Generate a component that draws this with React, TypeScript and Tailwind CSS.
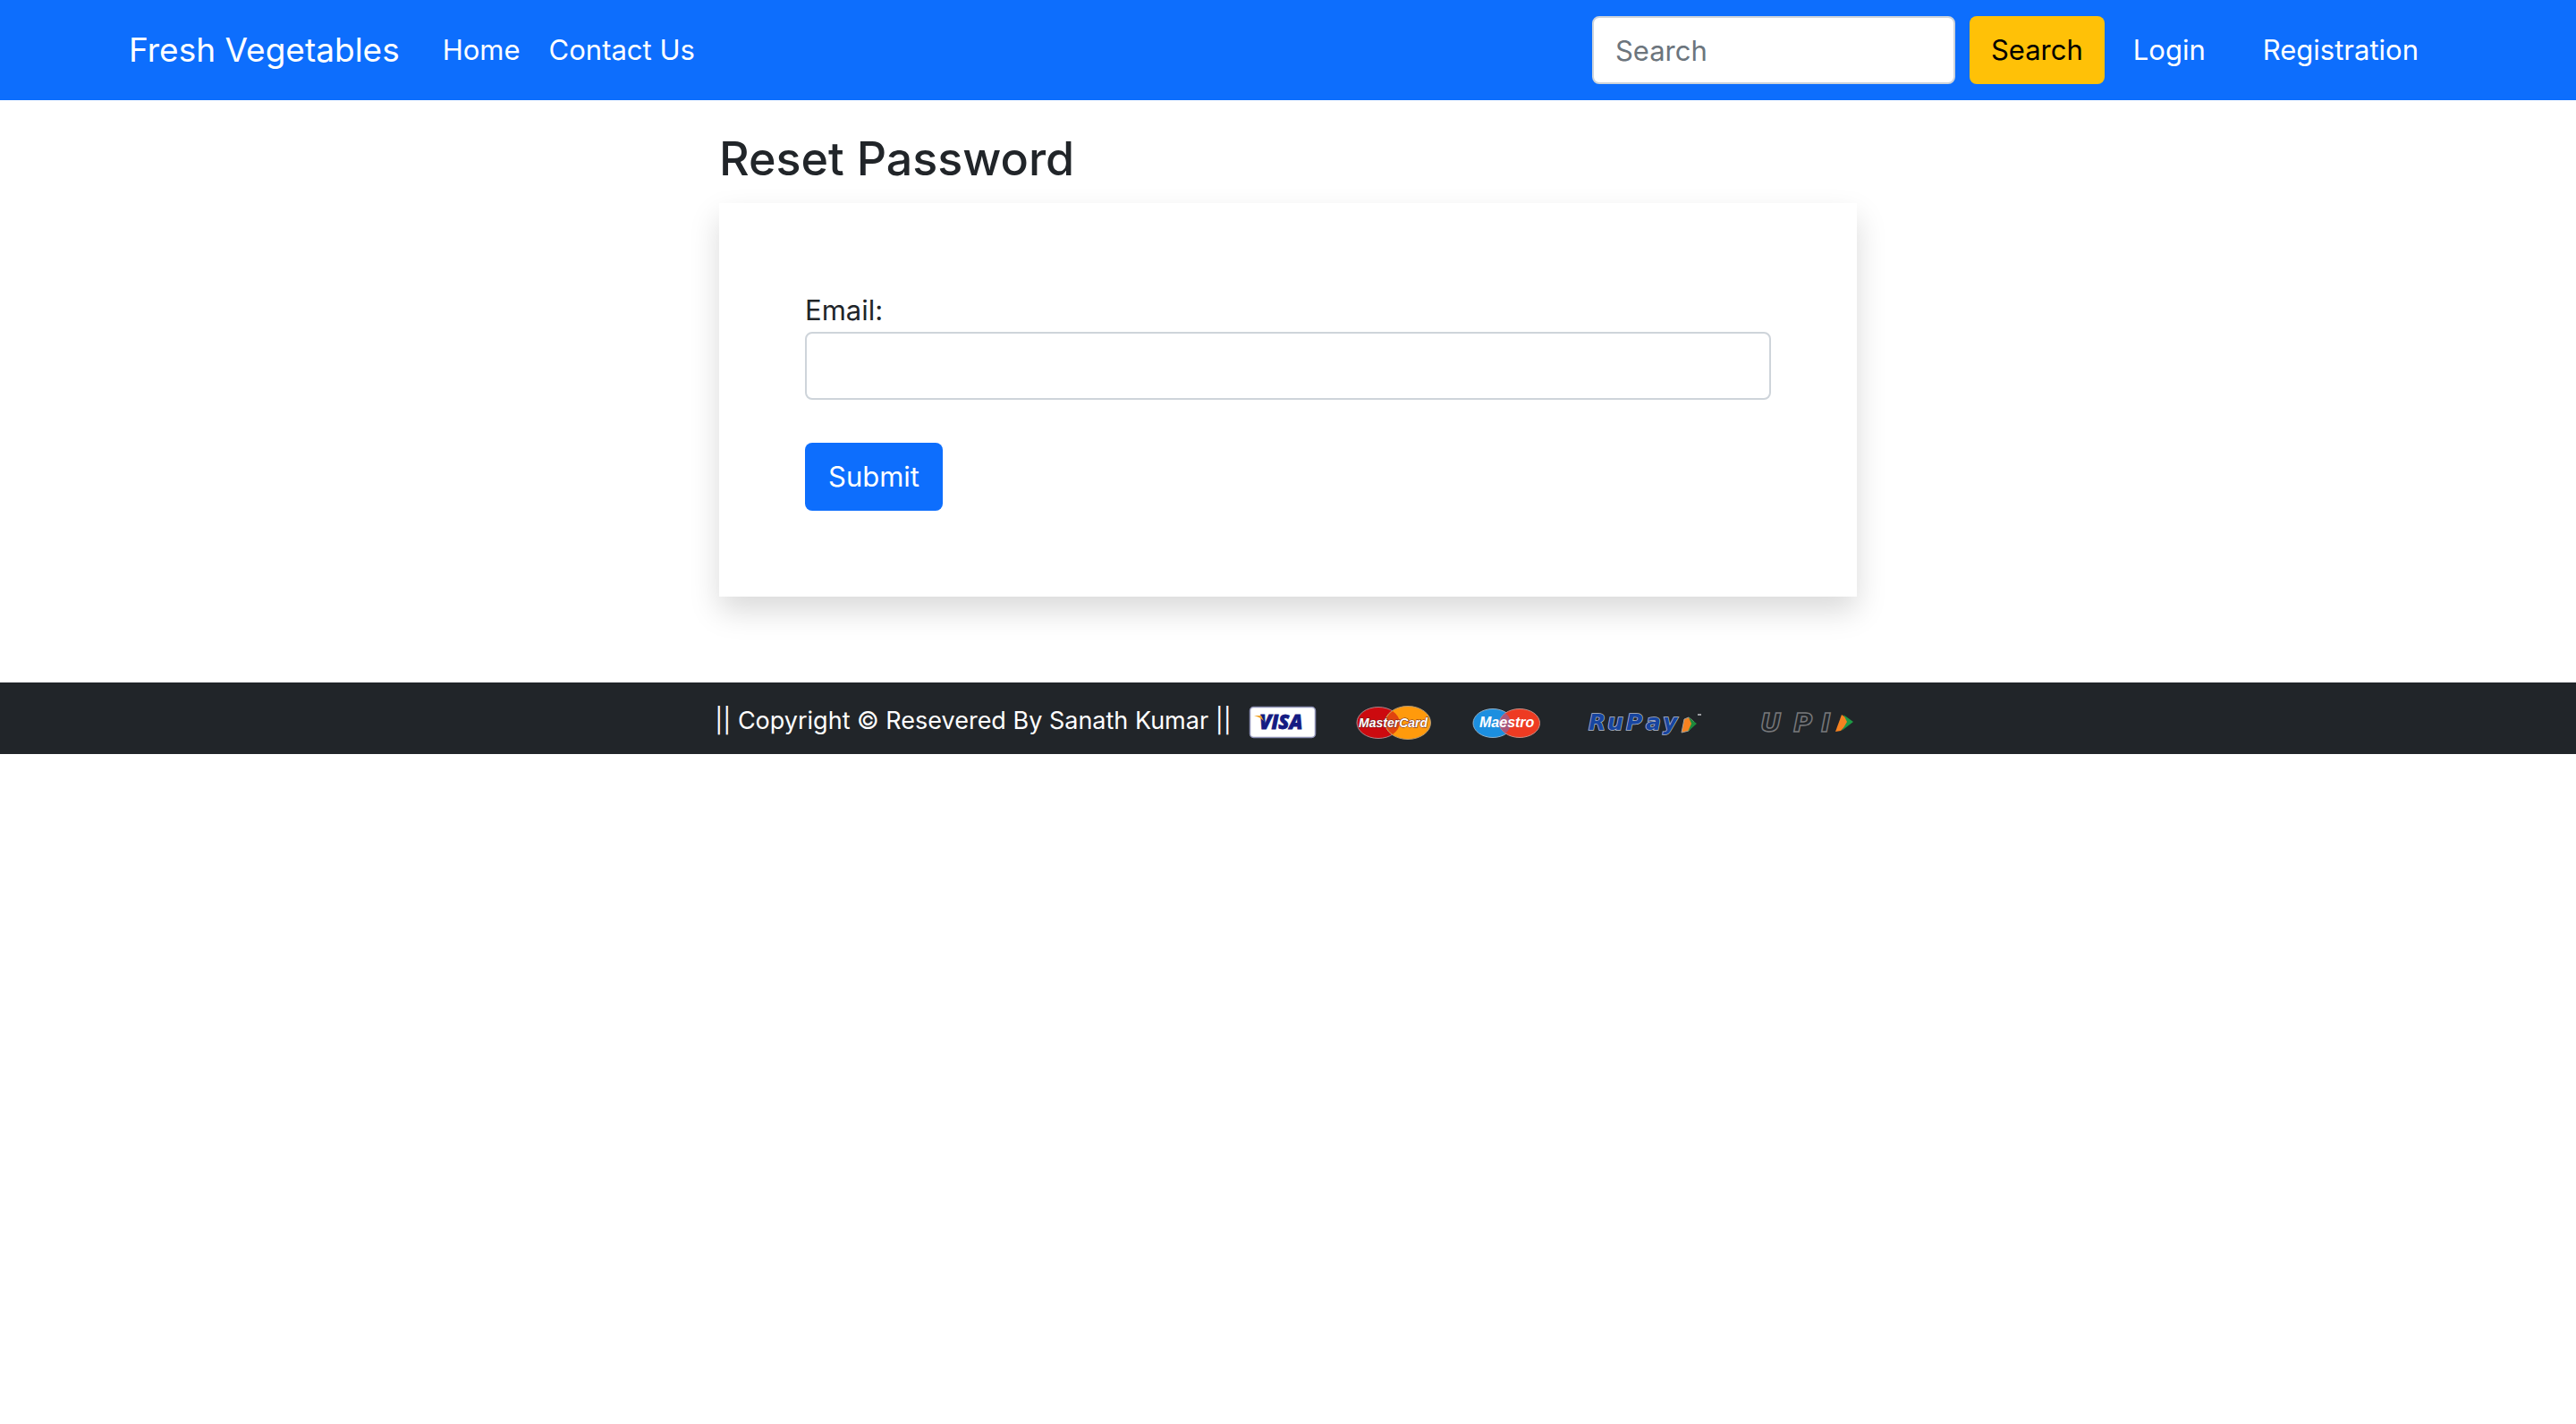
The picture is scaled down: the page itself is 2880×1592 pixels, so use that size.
import React from "react";

function CardLogos() {
  return (
    <svg
      role="img"
      aria-label="Accepted payments: Visa, MasterCard, Maestro, RuPay, UPI"
      viewBox="0 -17 700 80"
      className="h-20 w-[700px] shrink-0"
    >
      {/* Visa */}
      <rect x="16.5" y="10.500" width="73" height="34" rx="4" fill="#fff" stroke="#8d90b5" strokeWidth="1.5" />
      <text x="27" y="35" fontFamily="Open Sans, sans-serif" fontWeight="800" fontStyle="italic" fontSize="22" fill="#151b82" stroke="#151b82" strokeWidth="0.8">VISA</text>
      <path d="M21 20h8l3 6c-3-3-7-5-11-6z" fill="#f0a52c" />

      {/* MasterCard */}
      <ellipse cx="160" cy="28" rx="24" ry="17.5" fill="#cc0a0f" stroke="#a9858a" strokeWidth="1" />
      <ellipse cx="193" cy="28" rx="25.5" ry="18.5" fill="#ff9a0c" stroke="#b79a70" strokeWidth="1" />
      <path d="M176 15q8 6 8 13t-8 13q-8-6-8-13t8-13z" fill="#e0440f" />
      <text x="138" y="33" fontFamily="Liberation Sans, sans-serif" fontWeight="700" fontStyle="italic" fontSize="14" fill="#fff" stroke="#6a2020" strokeWidth="1" paintOrder="stroke">MasterCard</text>

      {/* Maestro */}
      <ellipse cx="288" cy="28.5" rx="22" ry="16" fill="#1c8fe0" stroke="#8fb0c8" strokeWidth="1" />
      <ellipse cx="318" cy="28.5" rx="22.5" ry="16" fill="#ee3b22" stroke="#c78f86" strokeWidth="1" />
      <path d="M302 17q6 5 6 11.500t-6 11.500q-6-5-6-11.500t6-11.500z" fill="#a8577c" />
      <text x="273" y="33" fontFamily="Liberation Sans, sans-serif" fontWeight="700" fontStyle="italic" fontSize="16" fill="#fff">Maestro</text>

      {/* RuPay */}
      <text x="395 416 437 459 478" y="36" fontFamily="DejaVu Sans, sans-serif" fontWeight="700" fontStyle="italic" fontSize="25" fill="#1745a0" stroke="#b4bccb" strokeWidth="1.5" paintOrder="stroke">RuPay</text>
      <path d="M502 24l5-2 6 5-6 10-8 2z" fill="#f58220" stroke="#a8a39a" strokeWidth="1" />
      <path d="M507 22l9 7-10 9 4-9z" fill="#1d8a3c" />
      <rect x="517" y="18" width="4" height="2" fill="#9a9ca0" />

      {/* UPI */}
      <text x="587 624 655" y="38" fontFamily="DejaVu Sans, sans-serif" fontWeight="700" fontStyle="italic" fontSize="29" fill="none" stroke="#77787b" strokeWidth="1.5">UPI</text>
      <path d="M678 19l10 7-11 11-6 1z" fill="#f58220" />
      <path d="M680 19l11 8-13 10 6-10z" fill="#1d9a45" />
    </svg>
  );
}

export default function App() {
  return (
    <div className="min-h-screen bg-white font-['Inter','Noto_Sans',sans-serif] text-[31px] leading-[48px] text-[#212529]">
      <header className="bg-[#0d6efd]">
        <nav className="mx-auto flex max-w-[2640px] items-center px-6 py-[18px] text-white">
          <a href="#" className="mr-8 text-[37px] leading-[60px]">Fresh Vegetables</a>
          <a href="#" className="px-4">Home</a>
          <a href="#" className="px-4">Contact Us</a>
          <form className="ml-auto flex gap-4" onSubmit={(e) => e.preventDefault()}>
            <input
              type="search"
              aria-label="Search"
              placeholder="Search"
              className="h-[76px] w-[406px] rounded-lg border-2 border-[#ced4da] bg-white px-6 text-[#212529] placeholder:text-[#6c757d]"
            />
            <button type="submit" className="h-[76px] rounded-lg bg-[#ffc107] px-6 text-black">Search</button>
          </form>
          <a href="#" className="px-8">Login</a>
          <a href="#" className="px-8">Registration</a>
        </nav>
      </header>

      <main className="mx-auto mt-8 mb-24 max-w-[1272px]">
        <h3 className="mb-4 text-[52px] leading-[67px] font-medium">Reset Password</h3>
        <form
          className="bg-white p-24 shadow-[0_16px_32px_rgba(0,0,0,0.15)]"
          onSubmit={(e) => e.preventDefault()}
        >
          <label htmlFor="email" className="block">Email:</label>
          <input
            id="email"
            type="email"
            className="block h-[76px] w-full rounded-lg border-2 border-[#ced4da] bg-white px-6"
          />
          <button type="submit" className="mt-12 block h-[76px] rounded-lg bg-[#0d6efd] px-[26px] text-white">Submit</button>
        </form>
      </main>

      <footer className="flex h-20 items-center justify-center gap-1 bg-[#212529] text-white">
        <p className="pt-1.5 text-[27px] leading-10">|| Copyright © Resevered By Sanath Kumar ||</p>
        <CardLogos />
      </footer>
    </div>
  );
}
